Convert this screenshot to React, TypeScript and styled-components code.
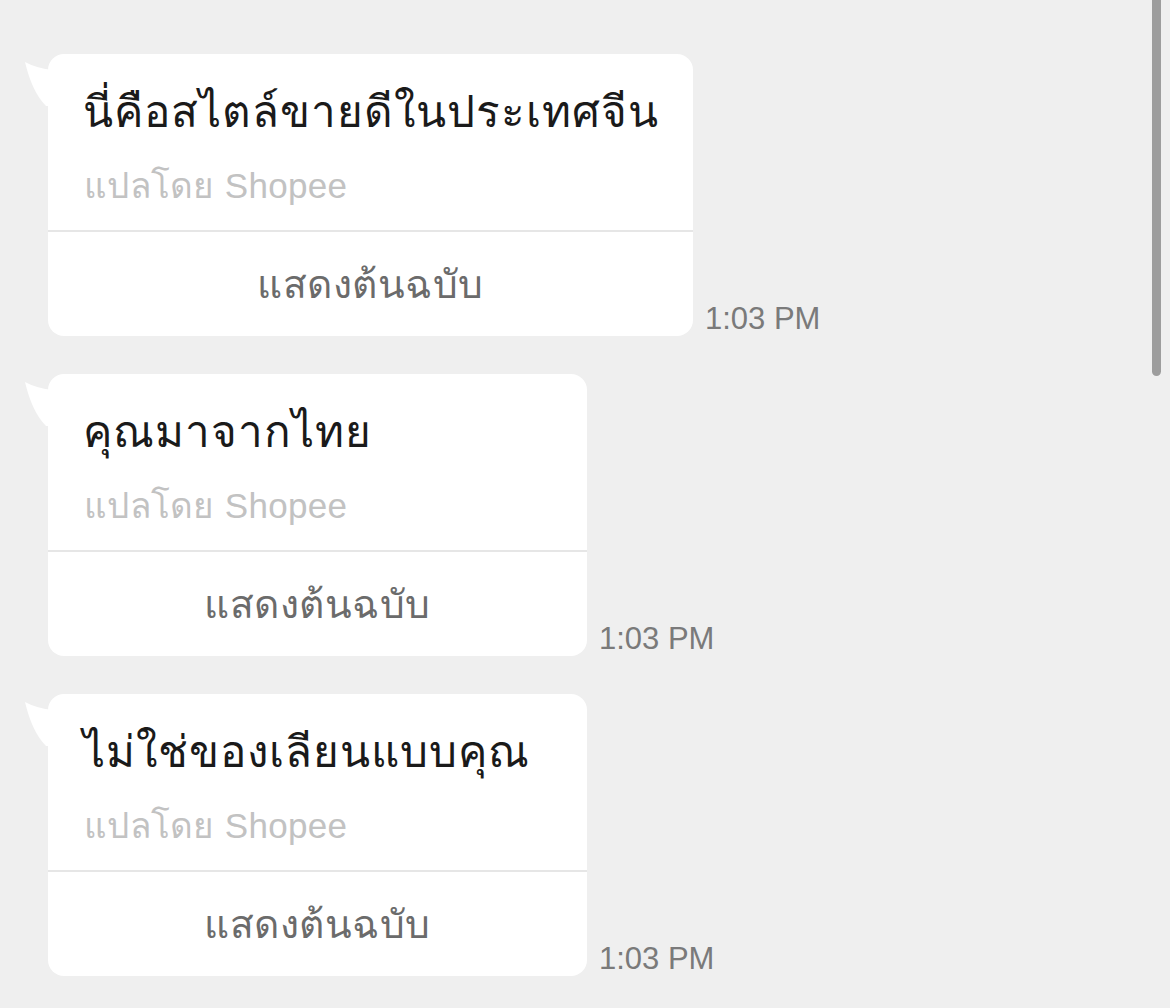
import React from 'react';
import styled, {createGlobalStyle} from "styled-components";

const GlobalStyle = createGlobalStyle`
    html, body {
        margin: 0;
        padding: 0;
        background: #efefef;
        font-family: "Liberation Sans", "Noto Sans", sans-serif;
    }
`

const Page = styled.div`
    position: relative;
    width: 1170px;
    height: 1008px;
    overflow: hidden;
    background: #efefef;
    box-sizing: border-box;
    padding: 54px 0 0 48px;
    display: flex;
    flex-direction: column;
    gap: 38px;
`

const MessageRow = styled.div`
    display: flex;
    align-items: flex-end;
    gap: 12px;
`

const Bubble = styled.div<{ $width: number }>`
    position: relative;
    width: ${p => p.$width}px;
    background: #ffffff;
    border-radius: 16px;
    display: flex;
    flex-direction: column;
`

const Tail = styled.svg`
    position: absolute;
    left: -24px;
    top: 4px;
`

const Body = styled.div`
    padding: 30px 37px 22px 35px;
    display: flex;
    flex-direction: column;
    gap: 24px;
`

const MainText = styled.div`
    font-size: 44px;
    line-height: 56px;
    letter-spacing: 1px;
    color: #1a1a1a;
    white-space: nowrap;
`

const Translated = styled.div`
    font-size: 35px;
    line-height: 44px;
    letter-spacing: 0.3px;
    color: #c2c2c2;
    white-space: nowrap;
    padding-left: 1px;
`

const Divider = styled.div`
    height: 2px;
    background: #e6e6e6;
`

const ShowOriginal = styled.div`
    height: 104px;
    display: flex;
    align-items: center;
    justify-content: center;
    font-size: 39px;
    letter-spacing: 0.5px;
    color: #6b6b6b;
`

const Time = styled.div`
    font-size: 31px;
    line-height: 34px;
    color: #7a7a7a;
`

const ScrollThumb = styled.div`
    position: absolute;
    top: 0;
    left: 1152px;
    width: 9px;
    height: 376px;
    background: #9d9d9d;
    border-radius: 0 0 5px 5px;
`

const messages = [
    {text: "นี่คือสไตล์ขายดีในประเทศจีน", width: 645},
    {text: "คุณมาจากไทย", width: 539},
    {text: "ไม่ใช่ของเลียนแบบคุณ", width: 539},
]

const Message = ({text, width}: { text: string, width: number }) => (
    <MessageRow>
        <Bubble $width={width}>
            <Tail width="28" height="50" viewBox="0 0 28 50">
                <path d="M1 4 Q12 10 28 12 L28 48 L22 48 Q8 34 1 4 Z" fill="#ffffff"/>
            </Tail>
            <Body>
                <MainText>{text}</MainText>
                <Translated>แปลโดย Shopee</Translated>
            </Body>
            <Divider/>
            <ShowOriginal>แสดงต้นฉบับ</ShowOriginal>
        </Bubble>
        <Time>1:03 PM</Time>
    </MessageRow>
)

export default function App() {
    return (
        <>
            <GlobalStyle/>
            <Page>
                {messages.map((m, i) => <Message key={i} text={m.text} width={m.width}/>)}
                <ScrollThumb/>
            </Page>
        </>
    )
}
